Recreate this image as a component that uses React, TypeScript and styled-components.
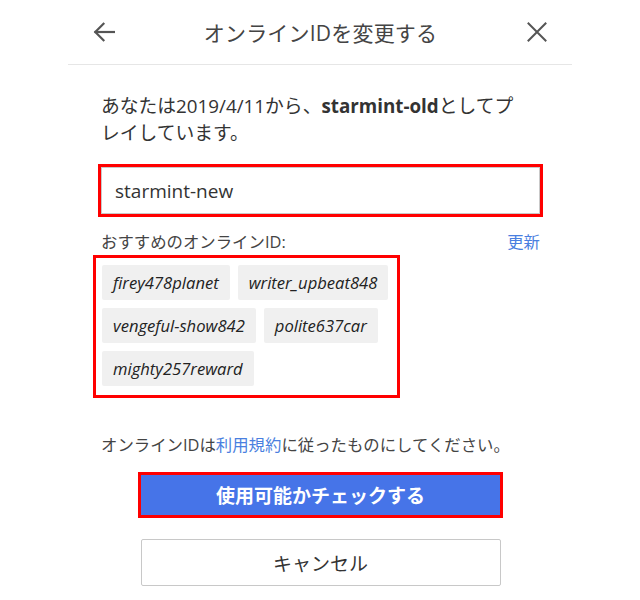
import React from "react";
import styled, { createGlobalStyle } from "styled-components";

const GlobalStyle = createGlobalStyle`
  html, body {
    margin: 0;
    padding: 0;
    background: #ffffff;
  }
  body {
    font-family: "Open Sans", "Noto Sans CJK JP", sans-serif;
    color: #333333;
  }
  * { box-sizing: border-box; }
`;

const Page = styled.div`
  width: 504px;
  margin: 0 auto;
`;

const Header = styled.header`
  height: 65px;
  display: flex;
  align-items: center;
  justify-content: space-between;
  padding: 0 24px 0 25px;
  border-bottom: 1px solid #e6e6e6;
`;

const IconButton = styled.button`
  width: 22px;
  height: 22px;
  padding: 0;
  border: none;
  background: transparent;
  display: flex;
  align-items: center;
  justify-content: center;
  color: #555555;
  cursor: pointer;
`;

const Title = styled.h1`
  margin: 0;
  font-size: 21px;
  font-weight: 400;
  color: #444444;
  letter-spacing: 0.2px;
`;

const Body = styled.main`
  padding: 0 32px 0 33px;
`;

const Intro = styled.p`
  margin: 28px 0 0;
  max-width: 425px;
  font-size: 18.8px;
  line-height: 27px;
  color: #333333;
`;

const Strong = styled.strong`
  font-weight: 700;
`;

const IdInput = styled.input`
  display: block;
  width: 100%;
  height: 47px;
  margin-top: 20px;
  padding: 0 13px;
  border: 1px solid #c9c9c9;
  border-radius: 0;
  outline: 3px solid #ff0000;
  font-family: "Open Sans", "Noto Sans CJK JP", sans-serif;
  font-size: 19px;
  color: #333333;
  background: #ffffff;
`;

const LabelRow = styled.div`
  margin-top: 17px;
  display: flex;
  justify-content: space-between;
  align-items: center;
  font-size: 16.4px;
  line-height: 22px;
`;

const Label = styled.span`
  color: #444444;
`;

const Link = styled.a`
  color: #4a7fe0;
  text-decoration: none;
`;

const ChipBox = styled.div`
  margin-top: 5px;
  margin-left: -5px;
  width: 301px;
  padding: 7px 2px 9px 6px;
  outline: 3px solid #ff0000;
  display: flex;
  flex-wrap: wrap;
  gap: 8px 8px;
`;

const Chip = styled.button`
  height: 35px;
  padding: 0 11px;
  border: none;
  border-radius: 2px;
  background: #f0f0f0;
  display: flex;
  align-items: center;
  font-family: "Open Sans", "Noto Sans CJK JP", sans-serif;
  font-style: italic;
  font-size: 16.6px;
  color: #222222;
  cursor: pointer;
`;

const Terms = styled.p`
  margin: 38px 0 0;
  font-size: 16.4px;
  line-height: 24px;
  color: #444444;
`;

const Actions = styled.div`
  display: flex;
  flex-direction: column;
  align-items: center;
`;

const PrimaryButton = styled.button`
  margin-top: 18px;
  width: 359px;
  height: 40px;
  border: none;
  border-radius: 0;
  outline: 3px solid #ff0000;
  background: #4674e8;
  color: #ffffff;
  font-family: "Open Sans", "Noto Sans CJK JP", sans-serif;
  font-size: 19px;
  font-weight: 700;
  cursor: pointer;
`;

const SecondaryButton = styled.button`
  margin-top: 24px;
  width: 360px;
  height: 47px;
  border: 1px solid #c8c8c8;
  border-radius: 2px;
  background: #ffffff;
  color: #333333;
  font-family: "Open Sans", "Noto Sans CJK JP", sans-serif;
  font-size: 19px;
  cursor: pointer;
`;

const BackIcon = () => (
  <svg width="22" height="20" viewBox="0 0 22 20" fill="none" stroke="currentColor" strokeWidth="2.2" strokeLinecap="square">
    <path d="M21 10H2.5" />
    <path d="M10.5 1.8L2.3 10l8.2 8.2" />
  </svg>
);

const CloseIcon = () => (
  <svg width="20" height="20" viewBox="0 0 20 20" fill="none" stroke="currentColor" strokeWidth="2" strokeLinecap="square">
    <path d="M1.5 1.5l17 17M18.5 1.5l-17 17" />
  </svg>
);

const suggestions = [
  "firey478planet",
  "writer_upbeat848",
  "vengeful-show842",
  "polite637car",
  "mighty257reward",
];

export default function App() {
  return (
    <>
      <GlobalStyle />
      <Page>
        <Header>
          <IconButton aria-label="戻る">
            <BackIcon />
          </IconButton>
          <Title>オンラインIDを変更する</Title>
          <IconButton aria-label="閉じる">
            <CloseIcon />
          </IconButton>
        </Header>
        <Body>
          <Intro>
            あなたは2019/4/11から、<Strong>starmint-old</Strong>としてプレイしています。
          </Intro>
          <IdInput defaultValue="starmint-new" />
          <LabelRow>
            <Label>おすすめのオンラインID:</Label>
            <Link href="#">更新</Link>
          </LabelRow>
          <ChipBox>
            {suggestions.map((s) => (
              <Chip key={s}>{s}</Chip>
            ))}
          </ChipBox>
          <Terms>
            オンラインIDは<Link href="#">利用規約</Link>に従ったものにしてください。
          </Terms>
          <Actions>
            <PrimaryButton>使用可能かチェックする</PrimaryButton>
            <SecondaryButton>キャンセル</SecondaryButton>
          </Actions>
        </Body>
      </Page>
    </>
  );
}
